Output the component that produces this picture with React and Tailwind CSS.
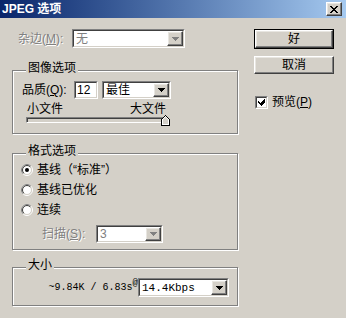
import React from "react";

// classic 3D edges
const raised =
  "border border-t-white border-l-white border-r-[#404040] border-b-[#404040] bg-[#d4d0c8] shadow-[inset_-1px_-1px_0_#808080,inset_1px_1px_0_#e8e6e1]";
const disabledText = "text-[#808080] [text-shadow:1px_1px_0_#fff]";
const cjk = "font-['Noto_Sans_CJK_SC',sans-serif]";

function Arrow({ disabled }) {
  const c = disabled ? "#808080" : "#000";
  return (
    <svg width="7" height="4" viewBox="0 0 7 4" shapeRendering="crispEdges">
      <rect x="0" y="0" width="7" height="1" fill={c} />
      <rect x="1" y="1" width="5" height="1" fill={c} />
      <rect x="2" y="2" width="3" height="1" fill={c} />
      <rect x="3" y="3" width="1" height="1" fill={c} />
    </svg>
  );
}

function Sunken({ className, children }) {
  return (
    <div className={`border border-t-[#808080] border-l-[#808080] border-b-white border-r-white ${className}`}>
      <div className="flex h-full w-full items-center border border-t-[#404040] border-l-[#404040] border-b-[#d4d0c8] border-r-[#d4d0c8] bg-white">
        {children}
      </div>
    </div>
  );
}

function Combo({ value, className, disabled, mono }) {
  return (
    <Sunken className={className}>
      <span
        className={`pl-[2px] leading-[14px] ${disabled ? "text-[#808080]" : "text-black"} ${
          mono ? "font-['Liberation_Mono',monospace] text-[11px]" : "text-[12px]"
        }`}
      >
        {value}
      </span>
      <div className={`${raised} ml-auto flex h-full w-[16px] items-center justify-center`}>
        <Arrow disabled={disabled} />
      </div>
    </Sunken>
  );
}

function Group({ title, className, children }) {
  return (
    <div className={`relative border border-[#808080] shadow-[inset_1px_1px_0_#fff,1px_1px_0_#fff] ${className}`}>
      <span className="absolute -top-[10px] left-[13px] bg-[#d4d0c8] px-[2px] text-[12px] leading-[14px]">
        {title}
      </span>
      {children}
    </div>
  );
}

function Radio({ checked }) {
  return (
    <svg width="12" height="12" viewBox="0 0 12 12">
      <circle cx="6" cy="6" r="5.5" fill="none" stroke="#fff" />
      <path d="M2.1 9.9 A5.5 5.5 0 0 1 9.9 2.1" fill="none" stroke="#808080" />
      <circle cx="6" cy="6" r="4.5" fill="#fff" stroke="#d4d0c8" />
      <path d="M2.8 9.2 A4.5 4.5 0 0 1 9.2 2.8" fill="none" stroke="#404040" />
      {checked && <circle cx="6" cy="6" r="2" fill="#000" />}
    </svg>
  );
}

function Check() {
  return (
    <Sunken className="h-[13px] w-[13px]">
      <svg width="9" height="9" viewBox="0 0 9 9" shapeRendering="crispEdges">
        <path d="M1 3h1v1h1v1h1V4h1V3h1V2h1V1h1v3H8v1H7v1H6v1H5v1H4V7H3V6H2V5H1z" fill="#000" />
      </svg>
    </Sunken>
  );
}

export default function App() {
  return (
    <div className="h-[318px] w-[346px] overflow-hidden bg-[#d4d0c8] font-['Liberation_Sans','Noto_Sans_CJK_SC',sans-serif] text-[12px] text-black">
      {/* title bar */}
      <div className="flex h-[18px] items-center bg-gradient-to-r from-[#0a246a] to-[#a6caf0] pl-[2px] pr-[4px]">
        <span className="text-[12px] font-bold leading-[14px] text-white">JPEG 选项</span>
        <div className={`${raised} ml-auto flex h-[14px] w-[16px] items-center justify-center`}>
          <svg width="8" height="7" viewBox="0 0 8 7" shapeRendering="crispEdges">
            <path d="M0 0h2v1h1v1h2V1h1V0h2v1H7v1H6v1H5v1h1v1h1v1h1v1H6V6H5V5H3v1H2v1H0V6h1V5h1V4h1V3H2V2H1V1H0z" fill="#000" />
          </svg>
        </div>
      </div>

      <div className="flex">
        {/* left column */}
        <div className="w-[238px] pl-[12px] pt-[11px]">
          <div className="flex h-[19px] items-center pl-[6px]">
            <span className={`w-[54px] leading-[14px] ${disabledText}`}>
              杂边(<u>M</u>):
            </span>
            <Combo value="无" disabled className="h-[19px] w-[113px]" />
          </div>

          <Group title="图像选项" className="mt-[22px] h-[64px] pl-[9px] pt-[10px]">
            <div className="flex h-[18px] items-center">
              <span className="w-[52px] leading-[14px]">
                品质(<u>Q</u>):
              </span>
              <Sunken className="h-[18px] w-[24px]">
                <span className="pl-[1px] leading-[14px]">12</span>
              </Sunken>
              <Combo value="最佳" className="ml-[4px] h-[18px] w-[69px]" />
            </div>
            <div className="ml-[4px] mt-[4px] w-[142px]">
              <div className="flex h-[12px] items-center justify-between leading-[12px]">
                <span className="pl-[1px]">小文件</span>
                <span className="pr-[2px]">大文件</span>
              </div>
              <div className="relative mt-[2px] h-[6px] border border-t-[#808080] border-l-[#808080] border-b-white border-r-white shadow-[inset_1px_1px_0_#404040]">
                <svg className="absolute -right-[3px] -top-[3px]" width="9" height="11" viewBox="0 0 9 11" shapeRendering="crispEdges">
                  <path d="M4 0h1v1h1v1h1v1h1v1h1v7H0V4h1V3h1V2h1V1h1z" fill="#000" />
                  <path d="M4 1h1v1h1v1h1v1h1v6H1V4h1V3h1V2h1z" fill="#fff" />
                  <path d="M4 2h1v1h1v1h1v5H2V4h1V3h1z" fill="#d4d0c8" />
                </svg>
              </div>
            </div>
          </Group>

          <Group title="格式选项" className="mt-[19px] h-[97px] pl-[8px] pt-[5px]">
            <div className="flex h-[21px] items-center gap-[4px]">
              <Radio checked />
              <span className="leading-[14px]">
                基线<span className={cjk}>（</span>“标准”<span className={cjk}>）</span>
              </span>
            </div>
            <div className="flex h-[20px] items-center gap-[4px]">
              <Radio />
              <span className="leading-[14px]">基线已优化</span>
            </div>
            <div className="flex h-[20px] items-center gap-[4px]">
              <Radio />
              <span className="leading-[14px]">连续</span>
            </div>
            <div className="mt-[5px] flex h-[18px] items-center pl-[21px]">
              <span className={`w-[54px] leading-[14px] ${disabledText}`}>
                扫描(<u>S</u>):
              </span>
              <Combo value="3" disabled className="h-[18px] w-[67px]" />
            </div>
          </Group>

          <Group title="大小" className="mt-[17px] h-[39px] pr-[8px] pt-[10px]">
            <div className="flex h-[19px] items-center justify-end">
              <span className="font-['Liberation_Mono',monospace] text-[10px] leading-[12px]">
                ~9.84K / 6.83s<sup className="text-[9px]">@</sup>
              </span>
              <Combo value="14.4Kbps" mono className="h-[19px] w-[91px]" />
            </div>
          </Group>
        </div>

        {/* right column */}
        <div className="ml-[16px] w-[80px] pt-[11px]">
          <div className="border border-black">
            <div className={`${raised} flex h-[18px] items-center justify-center leading-[14px]`}>好</div>
          </div>
          <div className={`${raised} mt-[7px] flex h-[18px] items-center justify-center leading-[14px]`}>
            取消
          </div>
          <div className="ml-[1px] mt-[21px] flex items-center gap-[4px]">
            <Check />
            <span className="leading-[14px]">
              预览(<u>P</u>)
            </span>
          </div>
        </div>
      </div>
    </div>
  );
}
